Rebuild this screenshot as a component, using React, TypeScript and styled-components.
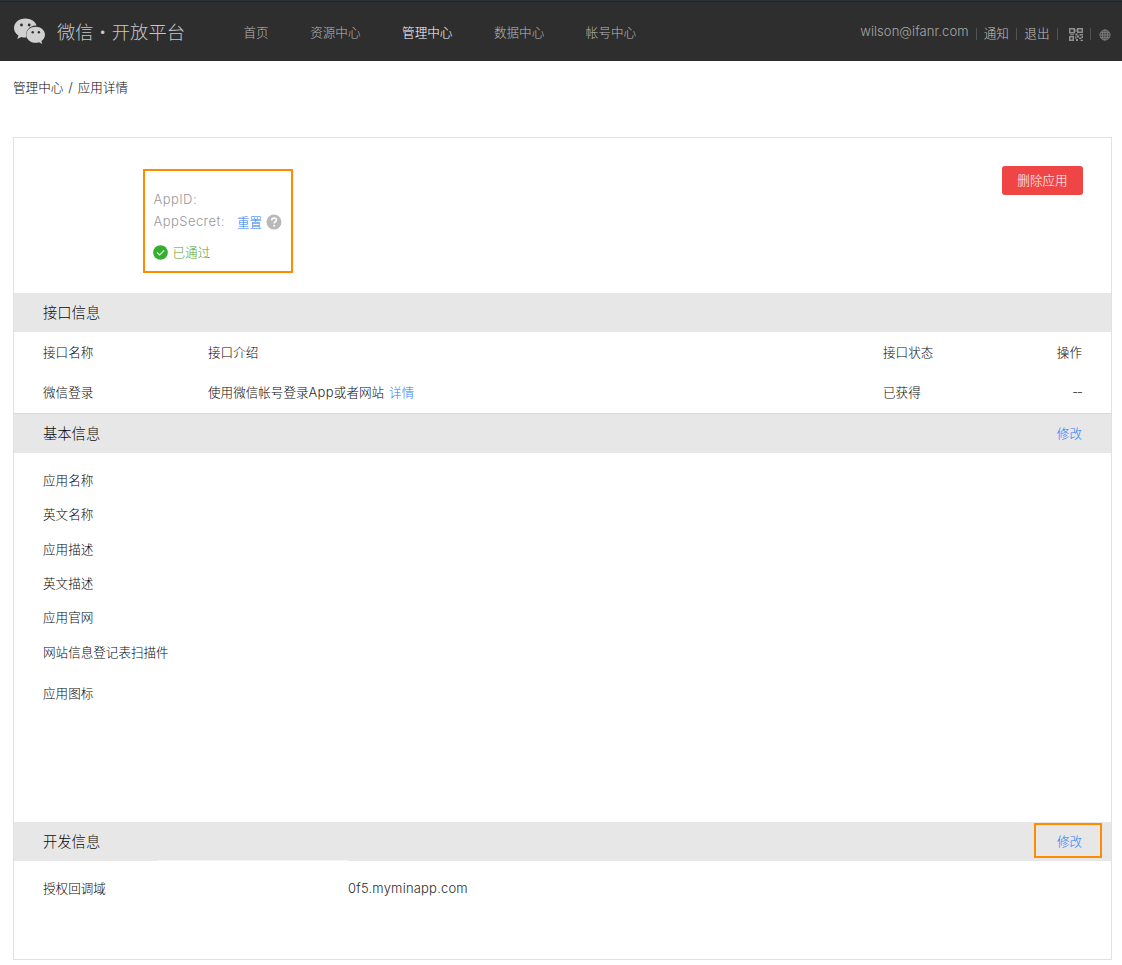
import React from 'react';
import styled, { createGlobalStyle } from 'styled-components';

const Global = createGlobalStyle`
  * { box-sizing: border-box; }
  body {
    margin: 0;
    background: #fff;
    color: #080808;
    font-family: "Noto Sans CJK SC", sans-serif;
    font-size: 12.57px;
    font-weight: 300;
    line-height: 20px;
  }
`;

const Latin = styled.span<{ $track?: number; $color?: string }>`
  font-family: Inter, "Noto Sans CJK SC", sans-serif;
  font-size: 13px;
  letter-spacing: ${p => p.$track ?? 0}px;
  color: ${p => p.$color ?? '#2c2c2c'};
`;

const Page = styled.div`
  height: 965px;
  overflow: hidden;
`;

const Header = styled.header`
  display: flex;
  align-items: flex-start;
  height: 61px;
  padding: 0 11px 0 13px;
  background: #2e2e2e;
  border-top: 1px solid #2a3236;
  box-shadow: inset 0 1px 0 #222627;
`;

const Brand = styled.div`
  display: flex;
  align-items: center;
  width: 230.5px;
  height: 60px;
  gap: 12px;
  font-size: 18.3px;
  color: #c8c8c8;
  white-space: nowrap;
`;

const Nav = styled.nav`
  display: flex;
  gap: 41.6px;
  padding-top: 21px;
`;

const NavItem = styled.a<{ $active?: boolean }>`
  color: ${p => (p.$active ? '#fff' : '#b8b8b8')};
`;

const Account = styled.div`
  display: flex;
  align-items: center;
  margin-left: auto;
  padding-top: 22px;
  color: #c0c0c0;
`;

const Email = styled.span`
  width: 108px;
  margin: -4px 8px 0 0;
  white-space: nowrap;
`;

const Divider = styled.i<{ $before?: number; $after: number }>`
  width: 1px;
  height: 12px;
  margin-top: 1px;
  margin-left: ${p => p.$before ?? 0}px;
  margin-right: ${p => p.$after}px;
  background: #535353;
`;

const AccountLink = styled.a<{ $after: number }>`
  margin-right: ${p => p.$after}px;
`;

const Breadcrumb = styled.div`
  display: flex;
  gap: 5px;
  padding: 16px 13px 0;
  height: 76px;
`;

const Card = styled.main`
  width: 1099px;
  height: 823px;
  margin-left: 13px;
  border: 1px solid #e1e1e1;
`;

const Summary = styled.section`
  display: flex;
  justify-content: space-between;
  align-items: flex-start;
  height: 155px;
  padding: 28px 28px 0 129px;
`;

const Credentials = styled.div`
  width: 150px;
  height: 104px;
  margin-top: 3px;
  padding: 17px 0 0 8.5px;
  border: 2px solid #ff8c00;
`;

const CredentialRow = styled.div`
  display: flex;
  align-items: center;
  height: 22px;
`;

const ResetGroup = styled.span`
  display: flex;
  align-items: center;
  gap: 3.5px;
  margin-left: 12px;
  padding-top: 1px;
`;

const Link = styled.a<{ $left?: number }>`
  margin-left: ${p => p.$left ?? 0}px;
  color: #1f7df5;
`;

const Passed = styled.div`
  display: flex;
  align-items: center;
  gap: 5px;
  height: 20px;
  margin-top: 10px;
  margin-left: -1px;
  color: #57a41f;
`;

const DeleteButton = styled.button`
  width: 81px;
  height: 29px;
  padding: 0 0 2px;
  border: 0;
  border-radius: 3px;
  background: #f04545;
  color: #fff;
  font: inherit;
`;

const SectionBar = styled.div<{ $lined?: boolean }>`
  display: flex;
  align-items: center;
  justify-content: space-between;
  height: ${p => (p.$lined ? 40 : 39)}px;
  padding: 0 29px 2px;
  background: #e7e7e7;
  border-top: ${p => (p.$lined ? '1px solid #d9d9d9' : '0')};
`;

const SectionTitle = styled.h2`
  margin: 0;
  font-size: 14.3px;
  font-weight: 300;
`;

const ApiTable = styled.div`
  height: 81px;
`;

const ApiRow = styled.div`
  display: grid;
  grid-template-columns: 165px 675px 1fr auto;
  align-items: center;
  height: 40px;
  padding: 0 29px;
`;

const BasicInfo = styled.div`
  height: 369px;
  padding: 17px 29px 0;
`;

const Field = styled.div<{ $height: number }>`
  height: ${p => p.$height}px;
`;

const EditFrame = styled.div`
  display: flex;
  align-items: center;
  height: 35px;
  width: 68px;
  margin-right: -20px;
  padding-left: 21px;
  border: 2px solid #ff8c00;
`;

const DomainRow = styled.div`
  display: flex;
  padding-left: 29px;
`;

const DomainLabel = styled.div`
  width: 115px;
  padding-top: 17px;
`;

const HiddenValue = styled.div`
  width: 190px;
  height: 50px;
  margin-top: -1px;
  background: #fff;
  border-top: 1px solid #f5f5f5;
`;

const DomainValue = styled.div`
  padding-top: 17px;
`;

function WechatLogo() {
  return (
    <svg width="32" height="27" viewBox="-0.5 -0.5 32 27">
      <path fill="#d0d0d0" d="M11.800 0C5.300 0 .5 4.200.5 9.600c0 3.100 1.700 5.700 4.400 7.500l-1.100 3.400 4-2c1.300.3 2.500.6 4 .6l1.100-.1C11 12 16.800 6.700 23 7.100 22 3 17.500 0 11.800 0Z" />
      <path fill="#d0d0d0" d="M31.500 16.200c0-4.500-4.300-8-9.300-8-5.300 0-9.400 3.500-9.400 8s4.100 8.100 9.400 8.100c1.100 0 2.300-.3 3.400-.6l3.100 1.700-.8-2.800c2.200-1.700 3.600-3.900 3.600-6.400Z" />
      <g fill="#2e2e2e">
        <circle cx="8" cy="6.500" r="1.400" />
        <circle cx="15.700" cy="6.500" r="1.400" />
        <circle cx="19.200" cy="13.700" r="1.200" />
        <circle cx="25.400" cy="13.700" r="1.200" />
      </g>
    </svg>
  );
}

const AccountSvg = styled.svg`
  margin-top: 3px;
`;

function QrIcon() {
  return (
    <AccountSvg width="14" height="13" viewBox="0 0 14 13" fill="#8f8f8f">
      <path fillRule="evenodd" d="M0 0h6v5.500H0ZM1.500 1.500v2.500h3v-2.500ZM8 0h6v5H8ZM9.500 1.500v2h3v-2ZM0 8h5v5H0ZM1.500 9.500v2h2v-2Z" />
      <path d="M6.500 1h1v3h-1ZM6.500 5.500h2v2h-2ZM1 6.300h4v1H1ZM8 7.500h2v2H8ZM10.500 6h3.500v1.500h-3.500ZM10 9.500h2.500v1.500H10ZM12.500 8H14v2h-1.500ZM6 8.500h1.500v2H6ZM7 11h2v2H7ZM11.500 11.800H14v1.200h-2.500Z" />
    </AccountSvg>
  );
}

function GlobeIcon() {
  return (
    <AccountSvg width="12" height="12" viewBox="0 0 12 12" fill="none" stroke="#808080" strokeWidth="0.8">
      <circle cx="6" cy="6" r="5.100" fill="#444" />
      <ellipse cx="6" cy="6" rx="2.600" ry="5.100" />
      <path d="M6 .9v10.200M.9 6h10.200M1.600 3.400h8.800M1.600 8.600h8.800" />
    </AccountSvg>
  );
}

function HelpIcon() {
  return (
    <svg width="16" height="16" viewBox="0 0 16 16">
      <circle cx="8" cy="8" r="7.500" fill="#b9b9b9" />
      <path d="M5.700 6.400c0-1.500 1-2.400 2.400-2.400s2.300.8 2.300 2.100c0 1.500-2.200 1.700-2.200 3.500" fill="none" stroke="#fff" strokeWidth="1.600" />
      <circle cx="8.200" cy="11.700" r="1" fill="#fff" />
    </svg>
  );
}

function CheckIcon() {
  return (
    <svg width="15" height="15" viewBox="0 0 15 15">
      <circle cx="7.500" cy="7.500" r="7.300" fill="#36ae30" />
      <path d="M4 7.500 6.600 10l4.600-4.600" fill="none" stroke="#d5efd3" strokeWidth="1.200" />
    </svg>
  );
}

const navItems = ['首页', '资源中心', '管理中心', '数据中心', '帐号中心'];

const fields = [
  { label: '应用名称', height: 34 },
  { label: '英文名称', height: 35 },
  { label: '应用描述', height: 34 },
  { label: '英文描述', height: 34 },
  { label: '应用官网', height: 35 },
  { label: '网站信息登记表扫描件', height: 41 },
  { label: '应用图标', height: 34 },
];

export default function App() {
  return (
    <Page>
      <Global />
      <Header>
        <Brand>
          <WechatLogo />
          <span>微信・开放平台</span>
        </Brand>
        <Nav>
          {navItems.map(item => (
            <NavItem key={item} $active={item === '管理中心'}>{item}</NavItem>
          ))}
        </Nav>
        <Account>
          <Email><Latin $track={0.07} $color="#a8a8a8">wilson@ifanr.com</Latin></Email>
          <Divider $after={6.5} />
          <AccountLink $after={7}>通知</AccountLink>
          <Divider $after={7.5} />
          <AccountLink $after={7.5}>退出</AccountLink>
          <Divider $after={11} />
          <QrIcon />
          <Divider $before={7} $after={8} />
          <GlobeIcon />
        </Account>
      </Header>
      <Breadcrumb>
        <span>管理中心</span>
        <Latin>/</Latin>
        <span>应用详情</span>
      </Breadcrumb>
      <Card>
        <Summary>
          <Credentials>
            <CredentialRow><Latin $track={0.45} $color="#999">AppID:</Latin></CredentialRow>
            <CredentialRow>
              <Latin $track={0.45} $color="#999">AppSecret:</Latin>
              <ResetGroup>
                <Link>重置</Link>
                <HelpIcon />
              </ResetGroup>
            </CredentialRow>
            <Passed><CheckIcon />已通过</Passed>
          </Credentials>
          <DeleteButton>删除应用</DeleteButton>
        </Summary>
        <SectionBar><SectionTitle>接口信息</SectionTitle></SectionBar>
        <ApiTable>
          <ApiRow>
            <span>接口名称</span>
            <span>接口介绍</span>
            <span>接口状态</span>
            <span>操作</span>
          </ApiRow>
          <ApiRow>
            <span>微信登录</span>
            <span>使用微信帐号登录<Latin $track={0.3}>App</Latin>或者网站<Link $left={5}>详情</Link></span>
            <span>已获得</span>
            <Latin $track={-1}>--</Latin>
          </ApiRow>
        </ApiTable>
        <SectionBar $lined>
          <SectionTitle>基本信息</SectionTitle>
          <Link>修改</Link>
        </SectionBar>
        <BasicInfo>
          {fields.map(f => <Field key={f.label} $height={f.height}>{f.label}</Field>)}
        </BasicInfo>
        <SectionBar>
          <SectionTitle>开发信息</SectionTitle>
          <EditFrame><Link>修改</Link></EditFrame>
        </SectionBar>
        <DomainRow>
          <DomainLabel>授权回调域</DomainLabel>
          <HiddenValue />
          <DomainValue><Latin $track={0.2}>0f5.myminapp.com</Latin></DomainValue>
        </DomainRow>
      </Card>
    </Page>
  );
}
